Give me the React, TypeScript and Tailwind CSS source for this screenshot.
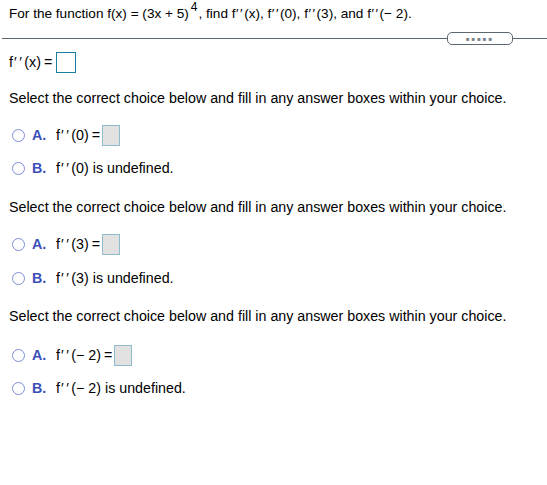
import React from "react";

function Prime({ arg, tight }: { arg: string; tight?: boolean }) {
  return (
    <span>
      f<span className={tight ? "ml-[0.5px] tracking-[1.5px]" : "ml-[1px] tracking-[2.5px]"}>′′</span>({arg})
    </span>
  );
}

function AnswerBox() {
  return <span className="inline-block w-[18px] h-[21px] bg-[#e1e1e1] border border-[#8fbccc]" />;
}

function Radio() {
  return <span className="inline-block w-[13px] h-[13px] rounded-full border-[1.5px] border-[#7d8fd4] bg-white" />;
}

function Choice({ arg, a, b }: { arg: string; a: string; b: string }) {
  return (
    <>
      <div className={`flex items-center h-[22px] pl-[12px] ${a}`}>
        <Radio />
        <span className="ml-[7px] font-bold text-[#3b4fb8] w-[24px]">A.</span>
        <Prime arg={arg} />
        <span className="ml-[3px] mr-[2px]">=</span>
        <AnswerBox />
      </div>
      <div className={`flex items-center h-[22px] pl-[12px] ${b}`}>
        <Radio />
        <span className="ml-[7px] font-bold text-[#3b4fb8] w-[24px]">B.</span>
        <span>
          <Prime arg={arg} /> is undefined.
        </span>
      </div>
    </>
  );
}

function Select({ mt }: { mt: string }) {
  return (
    <div className={`pl-[9px] h-[16px] ${mt}`}>
      Select the correct choice below and fill in any answer boxes within your choice.
    </div>
  );
}

export default function App() {
  return (
    <div className="w-[547px] h-[485px] bg-white text-black text-[14.25px] leading-[16px] font-['Liberation_Sans',Arial,sans-serif] flex flex-col">
      <div className="pl-[9px] pt-[6px] h-[32px] whitespace-nowrap text-[13.6px]">
        For the function f(x) = (3x + 5)
        <span className="relative -top-[7px] text-[12px] ml-[2px] mr-[1px]">4</span>, find <Prime tight arg="x" />,{" "}
        <Prime tight arg="0" />, <Prime tight arg="3" />, and <Prime tight arg="− 2" />.
      </div>
      <div className="flex items-center pl-[2px] h-[13px]">
        <div className="flex-1 h-px bg-[#5d6770]" />
        <div className="w-[66px] h-[13px] rounded-[5px] border border-[#5d6770] flex items-center justify-center bg-white">
          <span className="text-[6px] leading-none tracking-[2px] text-[#7a848c]">■■■■■</span>
        </div>
        <div className="w-[34px] h-px bg-[#5d6770]" />
      </div>
      <div className="flex items-center pl-[9px] mt-[6px] h-[22px]">
        <Prime arg="x" />
        <span className="ml-[3px] mr-[4px]">=</span>
        <span className="inline-block w-[20px] h-[21px] border border-[#1b7e9f] bg-white" />
      </div>
      <Select mt="mt-[17px]" />
      <Choice arg="0" a="mt-[18px]" b="mt-[11px]" />
      <Select mt="mt-[20px]" />
      <Choice arg="3" a="mt-[18px]" b="mt-[12px]" />
      <Select mt="mt-[19px]" />
      <Choice arg="− 2" a="mt-[20px]" b="mt-[11px]" />
    </div>
  );
}
